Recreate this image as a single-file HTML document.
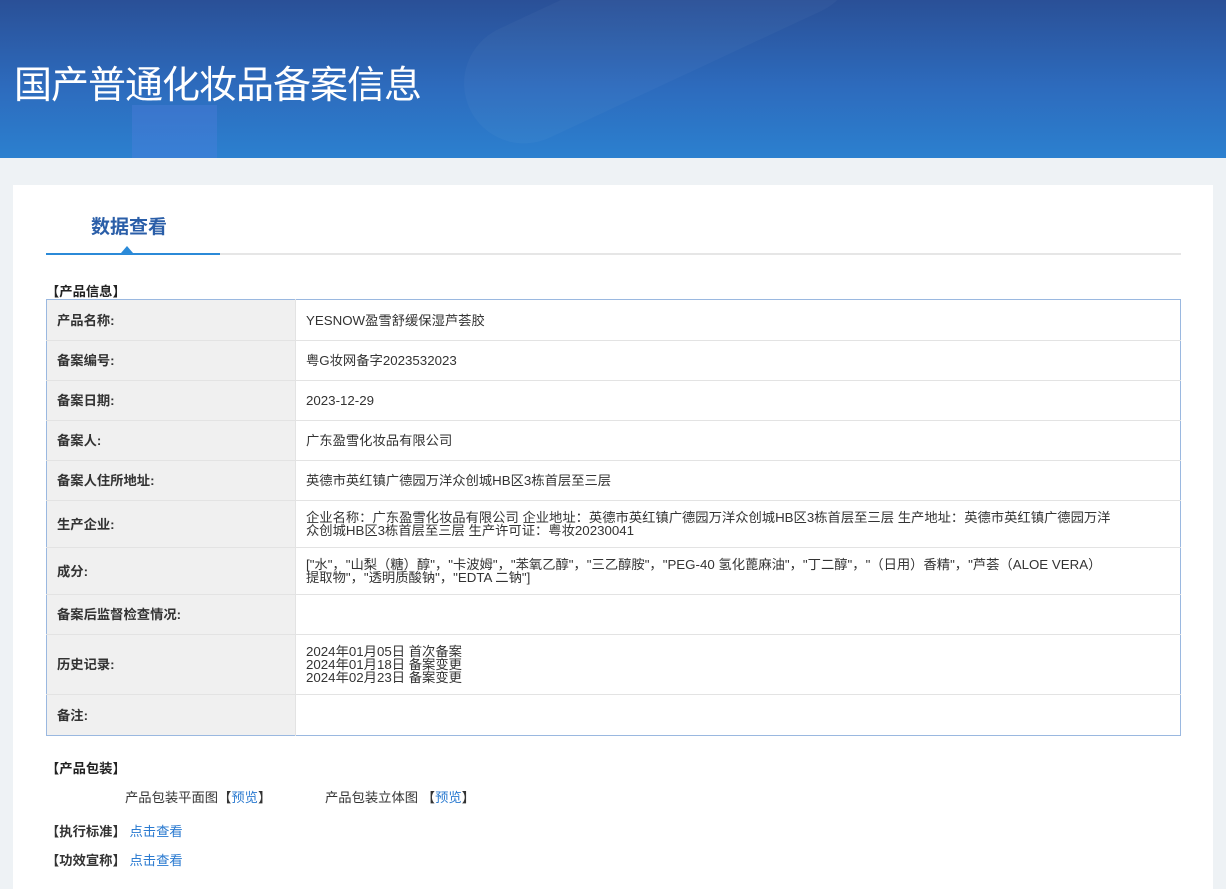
<!DOCTYPE html>
<html><head><meta charset="utf-8"><style>
*{margin:0;padding:0;box-sizing:border-box}
body{width:1226px;height:889px;overflow:hidden;background:#eef2f5;font-family:"Liberation Sans","Noto Sans CJK SC",sans-serif;font-size:13.3px;color:#333}
.hd{position:absolute;left:0;top:0;width:1226px;height:158px;background:linear-gradient(180deg,#2a5097 0%,#2d6bbd 55%,#2c80cf 100%);overflow:hidden}
.hd h1{position:absolute;left:14px;top:62px;font-size:38px;font-weight:normal;color:#fff;letter-spacing:-1px;line-height:48px}
.card{position:absolute;left:13px;top:185px;width:1200px;height:704px;background:#fff}
.tab{position:absolute;left:78px;top:27px;font-size:19px;font-weight:bold;color:#2a5ea8}
.line{position:absolute;left:33px;top:68px;width:1135px;height:2px;background:#e6e6e6}
.line2{position:absolute;left:33px;top:68px;width:174px;height:2px;background:#2b8ad8}
.tri{position:absolute;left:108px;top:61px;width:0;height:0;border-left:6px solid transparent;border-right:6px solid transparent;border-bottom:7px solid #2b8ad8}
.sec{position:absolute;font-weight:bold;color:#222;font-size:13.3px}
table{position:absolute;left:33px;top:114px;width:1135px;border-collapse:collapse;border:1px solid #9ab8e0}
td{border-top:1px solid #e3e3e3;padding:0 10px;vertical-align:middle;line-height:13px;font-size:13.3px}
td.l{width:249px;background:#f0f0f0;font-weight:bold;color:#333;border-right:1px solid #e3e3e3}
td.v{color:#333;padding-left:10px}
a{color:#2a7ad0;text-decoration:none}
</style></head><body>
<div class="hd">
<div style="position:absolute;left:450px;top:-40px;width:420px;height:120px;border-radius:60px;background:rgba(255,255,255,0.03);transform:rotate(-25deg)"></div>
<div style="position:absolute;left:132px;top:105px;width:85px;height:55px;background:rgba(90,130,230,0.3)"></div>
<h1>国产普通化妆品备案信息</h1></div>
<div class="card">
<div class="tab">数据查看</div>
<div class="line"></div><div class="line2"></div><div class="tri"></div>
<div class="sec" style="left:33px;top:96px">【产品信息】</div>
<table>
<tr style="height:41px"><td class="l" style="border-top:none">产品名称:</td><td class="v" style="border-top:none">YESNOW盈雪舒缓保湿芦荟胶</td></tr>
<tr style="height:40px"><td class="l">备案编号:</td><td class="v">粤G妆网备字2023532023</td></tr>
<tr style="height:40px"><td class="l">备案日期:</td><td class="v">2023-12-29</td></tr>
<tr style="height:40px"><td class="l">备案人:</td><td class="v">广东盈雪化妆品有限公司</td></tr>
<tr style="height:40px"><td class="l">备案人住所地址:</td><td class="v">英德市英红镇广德园万洋众创城HB区3栋首层至三层</td></tr>
<tr style="height:47px"><td class="l">生产企业:</td><td class="v">企业名称：广东盈雪化妆品有限公司 企业地址：英德市英红镇广德园万洋众创城HB区3栋首层至三层 生产地址：英德市英红镇广德园万洋<br>众创城HB区3栋首层至三层 生产许可证：粤妆20230041</td></tr>
<tr style="height:47px"><td class="l">成分:</td><td class="v">["水"，"山梨（糖）醇"，"卡波姆"，"苯氧乙醇"，"三乙醇胺"，"PEG-40 氢化蓖麻油"，"丁二醇"，"（日用）香精"，"芦荟（ALOE VERA）<br>提取物"，"透明质酸钠"，"EDTA 二钠"]</td></tr>
<tr style="height:40px"><td class="l">备案后监督检查情况:</td><td class="v"></td></tr>
<tr style="height:60px"><td class="l">历史记录:</td><td class="v">2024年01月05日 首次备案<br>2024年01月18日 备案变更<br>2024年02月23日 备案变更</td></tr>
<tr style="height:41px"><td class="l">备注:</td><td class="v"></td></tr>
</table>
<div class="sec" style="left:33px;top:573px">【产品包装】</div>
<div style="position:absolute;left:112px;top:602px">产品包装平面图【<a>预览</a>】</div>
<div style="position:absolute;left:312px;top:602px">产品包装立体图 【<a>预览</a>】</div>
<div style="position:absolute;left:33px;top:636px"><b>【执行标准】</b> <a>点击查看</a></div>
<div style="position:absolute;left:33px;top:665px"><b>【功效宣称】</b> <a>点击查看</a></div>
</div>
</body></html>
